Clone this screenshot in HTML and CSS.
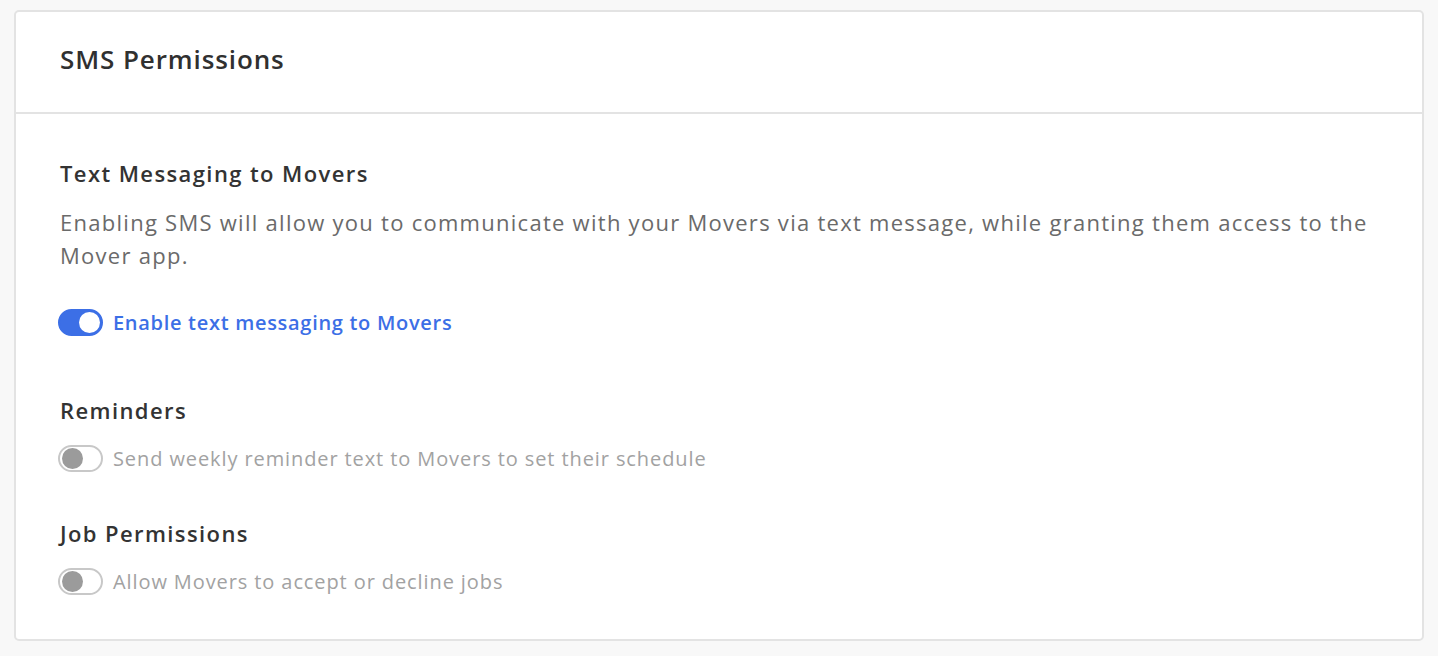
FILE: index.html
```html
<!DOCTYPE html>
<html lang="en">

<head>
    <meta charset="UTF-8">
    <meta name="viewport" content="width=device-width, initial-scale=1.0">
    <title>SMS Permissions</title>
    <link rel="stylesheet" href="styles.css">
</head>

<body>

    <div class="card">
        <div class="card-header">
            <h2>SMS Permissions</h2>
        </div>

        <div class="card-body">
            <div class="section">
                <h3>Text Messaging to Movers</h3>
                <p>Enabling SMS will allow you to communicate with your Movers via text message, while granting them access to the Mover app.</p>
                <label class="toggle-row on">
                    <span class="toggle"><span class="knob"></span></span>
                    <span class="toggle-label">Enable text messaging to Movers</span>
                </label>
            </div>

            <div class="section">
                <h3>Reminders</h3>
                <label class="toggle-row">
                    <span class="toggle"><span class="knob"></span></span>
                    <span class="toggle-label">Send weekly reminder text to Movers to set their schedule</span>
                </label>
            </div>

            <div class="section">
                <h3>Job Permissions</h3>
                <label class="toggle-row">
                    <span class="toggle"><span class="knob"></span></span>
                    <span class="toggle-label">Allow Movers to accept or decline jobs</span>
                </label>
            </div>
        </div>
    </div>

</body>

</html>
```

FILE: styles.css
```css
/* General Styles */
* {
    margin: 0;
    padding: 0;
    box-sizing: border-box;
    font-family: "Open Sans", Lato, sans-serif;
}

body {
    background-color: #f8f8f8;
    padding: 10px 14px 0 14px;
}

/* Card */
.card {
    background: white;
    border: 2px solid #e3e3e3;
    border-radius: 5px;
    height: 631px;
}

.card-header {
    height: 102px;
    border-bottom: 2px solid #e3e3e3;
    display: flex;
    align-items: center;
    padding: 0 0 6px 44px;
}

.card-header h2 {
    font-size: 26px;
    font-weight: 600;
    letter-spacing: 0.9px;
    color: #303030;
}

.card-body {
    padding: 44px 44px 0 44px;
}

/* Sections */
.section h3 {
    font-size: 22px;
    font-weight: 600;
    letter-spacing: 1.4px;
    color: #333;
    line-height: 30px;
}

.section p {
    font-size: 22px;
    letter-spacing: 1.27px;
    color: #6a6a6a;
    line-height: 33px;
    margin-top: 18px;
}

.section:first-child .toggle-row {
    margin-top: 37px;
}

.section + .section {
    margin-top: 59px;
}

.section:last-child {
    margin-top: 46px;
}

/* Toggles */
.toggle-row {
    display: flex;
    align-items: center;
    gap: 10px;
    margin-top: 20px;
    cursor: pointer;
}

.toggle {
    width: 45px;
    height: 27px;
    margin-left: -2px;
    border-radius: 14px;
    border: 2px solid #c8c8c8;
    background: white;
    display: flex;
    align-items: center;
    padding: 0 2px;
}

.knob {
    width: 21px;
    height: 21px;
    border-radius: 50%;
    background: #9b9b9b;
}

.toggle-label {
    font-size: 20px;
    letter-spacing: 0.9px;
    color: #a2a2a2;
}

.toggle-row.on .toggle {
    background: #3c6fe6;
    border-color: #3c6fe6;
    justify-content: flex-end;
    padding: 0 1px;
}

.toggle-row.on .knob {
    background: white;
}

.toggle-row.on .toggle-label {
    color: #3c6fe6;
    font-weight: 600;
    letter-spacing: 0.7px;
}
```
